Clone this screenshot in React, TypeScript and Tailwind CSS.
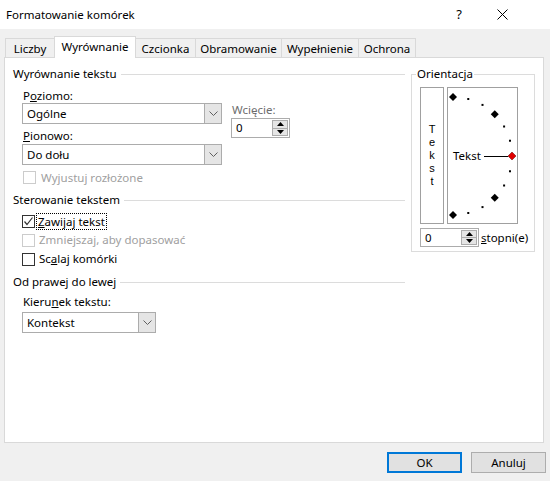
import React from "react";

const font = { fontFamily: '"Noto Sans", "Segoe UI", sans-serif' };

function Chevron() {
  return (
    <svg width="9" height="5" viewBox="0 0 9 5" className="block">
      <path d="M0.5 0.5 L4.5 4.5 L8.5 0.5" fill="none" stroke="#606060" strokeWidth="1" />
    </svg>
  );
}

function Select({ value, width }: { value: string; width: string }) {
  return (
    <div className={`${width} h-[21px] border border-[#acacac] flex bg-white`}>
      <div className="flex-1 pl-[4px] flex items-center text-black">{value}</div>
      <div className="w-[17px] border-l border-[#acacac] bg-[#e5e5e5] flex items-center justify-center">
        <Chevron />
      </div>
    </div>
  );
}

function Spinner({ value, h }: { value: string; h: string }) {
  return (
    <div className={`w-[59px] ${h} border border-[#acacac] flex bg-white`}>
      <div className="flex-1 pl-[4px] flex items-center text-black">{value}</div>
      <div className="w-[16px] my-[1px] mr-[1px] border border-[#acacac] bg-[#e5e5e5] flex flex-col">
        <div className="flex-1 flex items-center justify-center border-b border-[#acacac]">
          <svg width="7" height="4" viewBox="0 0 7 4"><path d="M0 4 L3.5 0 L7 4 Z" fill="#000" /></svg>
        </div>
        <div className="flex-1 flex items-center justify-center">
          <svg width="7" height="4" viewBox="0 0 7 4"><path d="M0 0 L3.5 4 L7 0 Z" fill="#000" /></svg>
        </div>
      </div>
    </div>
  );
}

function GroupHeader({ title }: { title: string }) {
  return (
    <div className="h-[16px] flex items-center gap-[4px]">
      <span className="text-black whitespace-nowrap">{title}</span>
      <div className="flex-1 h-px bg-[#dcdcdc]" />
    </div>
  );
}

function Checkbox({ checked, disabled }: { checked?: boolean; disabled?: boolean }) {
  return (
    <div
      className={`w-[13px] h-[13px] shrink-0 border bg-white flex items-center justify-center ${
        disabled ? "border-[#cccccc]" : "border-[#333333]"
      }`}
    >
      {checked && (
        <svg width="11" height="11" viewBox="0 0 11 11">
          <path d="M1.5 5.5 L4 8.5 L9.5 1.5" fill="none" stroke="#333" strokeWidth="1.2" />
        </svg>
      )}
    </div>
  );
}

function Orientation() {
  const cx = 5;
  const cy = 68;
  const r = 59;
  const pts = [];
  for (let a = 90; a >= -90; a -= 15) {
    const rad = (a * Math.PI) / 180;
    pts.push({ a, x: cx + r * Math.cos(rad), y: cy - r * Math.sin(rad) });
  }
  return (
    <svg width="69" height="135" className="absolute left-0 top-0">
      {pts.map((p) =>
        p.a % 45 === 0 ? (
          <polygon
            key={p.a}
            points={`${p.x},${p.y - 4} ${p.x + 4},${p.y} ${p.x},${p.y + 4} ${p.x - 4},${p.y}`}
            fill={p.a === 0 ? "#e00000" : "#000"}
            stroke={p.a === 0 ? "#600000" : "none"}
            strokeWidth="0.5"
          />
        ) : (
          <rect key={p.a} x={p.x - 1} y={p.y - 1} width="2" height="2" fill="#000" />
        )
      )}
      <text x="5" y="72" fontSize="11.5" fill="#000" style={font}>
        Tekst
      </text>
      <line x1="36" y1="68.5" x2="60" y2="68.5" stroke="#000" strokeWidth="1" />
    </svg>
  );
}

export default function App() {
  const tabs = [
    { label: "Liczby", w: "w-[50px] border-l" },
    { label: "Wyrównanie", w: "w-[82px]", active: true },
    { label: "Czcionka", w: "w-[60px]" },
    { label: "Obramowanie", w: "w-[86px]" },
    { label: "Wypełnienie", w: "w-[77px]" },
    { label: "Ochrona", w: "w-[57px]" },
  ];

  return (
    <div className="w-[550px] h-[481px] bg-[#f0f0f0] flex flex-col text-[11.5px] text-black overflow-hidden" style={font}>
      {/* title bar */}
      <div className="h-[29px] bg-white flex items-center pl-[6px] pr-[42px]">
        <span className="flex-1 text-[11.5px]">Formatowanie komórek</span>
        <span className="text-[13px] mr-[35px]">?</span>
        <svg width="11" height="11" viewBox="0 0 11 11">
          <path d="M0.5 0.5 L10.5 10.5 M10.5 0.5 L0.5 10.5" stroke="#000" strokeWidth="1" />
        </svg>
      </div>

      {/* tabs */}
      <div className="pt-[7px] pl-[5px] h-[28px] flex items-end">
        {tabs.map((t) =>
          t.active ? (
            <div
              key={t.label}
              className={`${t.w} -ml-px h-[22px] -mb-px relative z-10 bg-white border-l border-t border-r border-[#d9d9d9] flex items-center justify-center pb-[2px]`}
            >
              {t.label}
            </div>
          ) : (
            <div
              key={t.label}
              className={`${t.w} h-[19px] border-t border-r border-[#d9d9d9] flex items-center justify-center pt-[1px]`}
            >
              {t.label}
            </div>
          )
        )}
      </div>

      {/* panel */}
      <div className="ml-[4px] w-[540px] h-[386px] bg-white border border-[#d9d9d9] flex">
        <div className="w-[400px] pl-[8px] flex flex-col">
          <div className="mt-[8px]">
            <GroupHeader title="Wyrównanie tekstu" />
          </div>
          <div className="ml-[9px] flex">
            <div className="flex flex-col">
              <div className="mt-[6px] h-[15px] pl-[1px] flex items-center">
                <span>
                  P<span className="underline">o</span>ziomo:
                </span>
              </div>
              <Select value="Ogólne" width="w-[200px]" />
              <div className="mt-[4px] h-[16px] pl-[1px] flex items-center">
                <span>
                  <span className="underline">P</span>ionowo:
                </span>
              </div>
              <Select value="Do dołu" width="w-[200px]" />
            </div>
            <div className="ml-[9px] mt-[19px] flex flex-col">
              <div className="h-[17px] pl-[1px] flex items-center text-[#6d6d6d]">Wcięcie:</div>
              <Spinner value="0" h="h-[20px]" />
            </div>
          </div>
          <div className="ml-[10px] mt-[5px] h-[15px] flex items-center gap-[5px] text-[#a0a0a0]">
            <Checkbox disabled />
            <span>Wyjustuj rozłożone</span>
          </div>

          <div className="mt-[7px]">
            <GroupHeader title="Sterowanie tekstem" />
          </div>
          <div className="ml-[9px] mt-[5px] h-[16px] flex items-center gap-[2px]">
            <Checkbox checked />
            <span className="px-[1px] leading-[15px] outline outline-1 outline-dotted outline-black">
              <span className="underline">Z</span>awijaj tekst
            </span>
          </div>
          <div className="ml-[9px] mt-[3px] h-[16px] flex items-center gap-[4px] text-[#a0a0a0]">
            <Checkbox disabled />
            <span>Zmniejszaj, aby dopasować</span>
          </div>
          <div className="ml-[9px] mt-[3px] h-[16px] flex items-center gap-[4px]">
            <Checkbox />
            <span>
              Sc<span className="underline">a</span>laj komórki
            </span>
          </div>

          <div className="mt-[7px]">
            <GroupHeader title="Od prawej do lewej" />
          </div>
          <div className="ml-[10px] mt-[4px] h-[16px] flex items-center">
            <span>
              Kieru<span className="underline">n</span>ek tekstu:
            </span>
          </div>
          <div className="ml-[9px] mt-[2px]">
            <Select value="Kontekst" width="w-[134px]" />
          </div>
        </div>

        {/* orientation */}
        <fieldset className="ml-[6px] mt-[8px] w-[124px] h-[186px] border border-[#dcdcdc] pl-[4px] self-start">
          <legend className="px-[1px] leading-[16px]">Orientacja</legend>
          <div className="ml-[4px] mt-[5px] flex gap-[3px]">
            <div
              className="w-[24px] h-[137px] border border-[#a0a0a0] flex flex-col items-center justify-center text-[11px] leading-[13px]"
              style={{ fontFamily: '"Liberation Sans", Arial, sans-serif' }}
            >
              <span>T</span>
              <span>e</span>
              <span>k</span>
              <span>s</span>
              <span>t</span>
            </div>
            <div className="w-[71px] h-[137px] border border-[#a0a0a0] relative">
              <Orientation />
            </div>
          </div>
          <div className="ml-[4px] mt-[4px] flex items-center gap-[2px]">
            <Spinner value="0" h="h-[19px]" />
            <span>
              <span className="underline">s</span>topni(e)
            </span>
          </div>
        </fieldset>
      </div>

      {/* buttons */}
      <div className="mt-[9px] pr-[4px] flex justify-end gap-[9px]">
        <button className="w-[75px] h-[21px] bg-[#e1e1e1] border-2 border-[#0078d7] flex items-center justify-center">
          OK
        </button>
        <button className="w-[75px] h-[21px] bg-[#e1e1e1] border border-[#adadad] flex items-center justify-center">
          Anuluj
        </button>
      </div>
    </div>
  );
}
